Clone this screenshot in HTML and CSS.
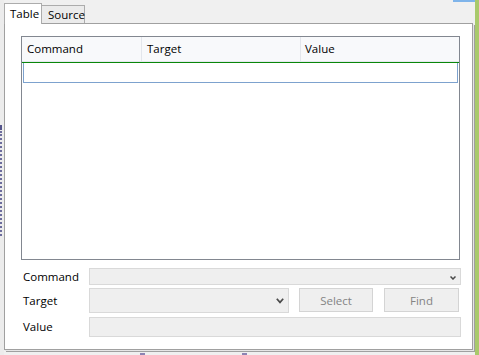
FILE: index.html
```html
<!DOCTYPE html>
<html lang="en">
<head>
    <meta charset="UTF-8">
    <title>Test Case Editor</title>
    <link rel="stylesheet" href="styles.css">
</head>
<body>
    <div class="window">
        <div class="gutter">
            <div class="gutter-mark"></div>
            <div class="gutter-dots"></div>
        </div>

        <div class="editor">
            <div class="tabs">
                <div class="tab active">Table</div>
                <div class="tab">Source</div>
            </div>

            <div class="panel">
                <!-- Command list -->
                <div class="grid">
                    <div class="grid-head">
                        <div class="head-cell col-cmd">Command</div>
                        <div class="head-cell col-target">Target</div>
                        <div class="head-cell col-value">Value</div>
                    </div>
                    <div class="grid-body">
                        <div class="grid-row selected"></div>
                    </div>
                </div>

                <!-- Command editor -->
                <div class="form">
                    <label class="form-label">Command</label>
                    <div class="combo combo-small">
                        <svg class="chevron chevron-small" width="6" height="4" viewBox="0 0 6 4">
                            <polyline points="0.5,0.5 3,3 5.5,0.5" fill="none" stroke="#4a4a4a" stroke-width="1.5"/>
                        </svg>
                    </div>

                    <label class="form-label">Target</label>
                    <div class="target-row">
                        <div class="combo combo-target">
                            <svg class="chevron" width="8" height="6" viewBox="0 0 8 6">
                                <polyline points="0.8,0.8 4,4.4 7.2,0.8" fill="none" stroke="#4a4a4a" stroke-width="1.7"/>
                            </svg>
                        </div>
                        <button class="btn btn-select" disabled>Select</button>
                        <button class="btn btn-find" disabled>Find</button>
                    </div>

                    <label class="form-label">Value</label>
                    <div class="text-input"></div>
                </div>
            </div>

            <div class="status">
                <span class="status-mark"></span>
                <span class="status-mark"></span>
            </div>
        </div>

        <div class="side-strip"></div>
    </div>

    <div class="top-edge"></div>
</body>
</html>
```

FILE: styles.css
```css
* {
    margin: 0;
    padding: 0;
    box-sizing: border-box;
}

body {
    width: 479px;
    height: 355px;
    overflow: hidden;
    background-color: #f0f0f0;
    font-family: "Segoe UI", "Open Sans", sans-serif;
    font-size: 11.5px;
    color: #000000;
}

.window {
    display: flex;
    width: 479px;
    height: 355px;
}

/* left gutter with the dotted guide */
.gutter {
    width: 4px;
    padding-top: 125px;
    background-color: #ececec;
}

.gutter-mark {
    width: 2px;
    height: 5px;
    background-color: #55558a;
}

.gutter-dots {
    width: 2px;
    height: 105px;
    margin-top: 1px;
    border-left: 2px dotted #6c6c9c;
}

.editor {
    width: 471px;
    display: flex;
    flex-direction: column;
}

.side-strip {
    width: 4px;
    background-color: #a9c96b;
}

.top-edge {
    position: absolute;
    top: 0;
    right: 4px;
    width: 22px;
    height: 2px;
    background-color: #7fb4ea;
}

/* tabs */
.tabs {
    height: 23px;
    display: flex;
    align-items: flex-end;
}

.tab {
    border: 1px solid #acacac;
    border-bottom: none;
    padding-left: 5px;
}

.tab.active {
    position: relative;
    z-index: 1;
    width: 38px;
    height: 21px;
    margin-bottom: -1px;
    padding-left: 5px;
    line-height: 19px;
    background-color: #ffffff;
}

.tab:not(.active) {
    width: 44px;
    height: 18px;
    margin-left: -1px;
    padding-left: 6px;
    line-height: 17px;
    background-color: #ebebeb;
}

/* tab page */
.panel {
    width: 469px;
    height: 328px;
    margin-bottom: 2px;
    display: flex;
    flex-direction: column;
    padding: 12px 12px 12px 16px;
    background-color: #ffffff;
    border: 1px solid #a0a0a0;
    box-shadow: 1px 1px 0 #e6e6e6, 2px 2px 0 #a0a0a0;
}

.grid {
    flex: 1;
    min-height: 0;
    border: 1px solid #828790;
    background-color: #ffffff;
}

.grid-head {
    display: flex;
    height: 25px;
    background-color: #f8f9fb;
    border-bottom: 1px solid #e4e8ee;
}

.head-cell {
    padding-left: 5px;
    line-height: 24px;
    border-right: 1px solid #e3e6ec;
}

.col-cmd {
    width: 120px;
}

.col-target {
    width: 159px;
}

.col-value {
    flex: 1;
    padding-left: 4px;
    border-right: none;
}

.grid-body {
    border-top: 1px solid #0a870a;
}

.grid-row {
    height: 20px;
    margin: 0 1px;
}

.grid-row.selected {
    border: 1px solid #7da2ce;
    border-top: none;
}

/* command / target / value editor */
.form {
    display: grid;
    grid-template-columns: 68px 1fr;
    grid-template-rows: 17px 25px 21px;
    row-gap: 3px;
    margin-top: 8px;
    margin-right: -1px;
}

.form-label {
    display: flex;
    align-items: center;
    padding-left: 2px;
}

.combo,
.text-input,
.btn {
    background-color: #efefef;
    border: 1px solid #d9d9d9;
}

.combo {
    display: flex;
    align-items: center;
    justify-content: flex-end;
    padding-right: 4px;
}

.combo-small {
    padding-top: 2px;
}

.chevron {
    display: block;
}

.target-row {
    display: flex;
    align-items: flex-start;
    padding-right: 2px;
}

.combo-target {
    flex: 1;
    height: 25px;
    margin-right: 10px;
}

.btn {
    height: 24px;
    font-family: inherit;
    font-size: 11.5px;
    color: #848484;
    border-color: #d4d4d4;
}

.btn-select {
    width: 74px;
    margin-right: 11px;
}

.btn-find {
    width: 75px;
}

.text-input {
    height: 20px;
    align-self: end;
}

/* bottom splitter marks */
.status {
    display: flex;
    gap: 97px;
    padding-left: 136px;
    padding-top: 1px;
}

.status-mark {
    width: 5px;
    height: 2px;
    background-color: #8c84b4;
}
```
